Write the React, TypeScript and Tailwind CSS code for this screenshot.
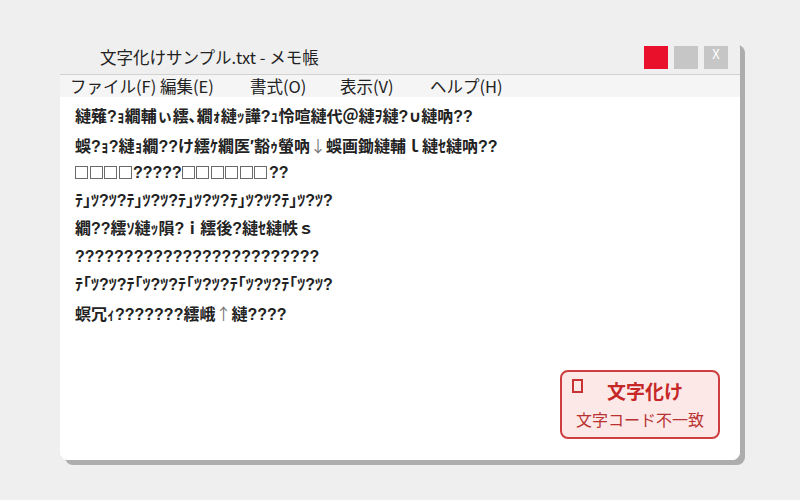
type Part = string | { box: number } | { arrow: string } | { sym: string };

const lines: Part[][] = [
  ["縺薙?ｮ繝輔ぃ繧､繝ｫ縺ｯ譁?ｭ怜喧縺代＠縺ｦ縺?", { sym: "∪" }, "縺吶??"],
  ["蜈?ｮ?縺ｮ繝??け繧ｹ繝医′豁ｩ螢吶", { arrow: "↓" }, "蜈画鋤縺輔ｌ縺ｾ縺吶??"],
  [{ box: 4 }, "?????", { box: 6 }, "??"],
  ["ﾃ｣ﾂ?ﾂ?ﾃ｣ﾂ?ﾂ?ﾃ｣ﾂ?ﾂ?ﾃ｣ﾂ?ﾂ?ﾃ｣ﾂ?ﾂ?"],
  ["繝??繧ｿ縺ｯ隕?ｉ繧後?縺ｾ縺帙ｓ"],
  ["?????????????????????????"],
  ["ﾃ｢ﾂ?ﾂ?ﾃ｢ﾂ?ﾂ?ﾃ｢ﾂ?ﾂ?ﾃ｢ﾂ?ﾂ?ﾃ｢ﾂ?ﾂ?"],
  ["螟冗ｨ???????繧峨", { arrow: "↑" }, "縺????"],
];

const menu = [
  { label: "ファイル(F) 編集(E)", w: "w-[180px]" },
  { label: "書式(O)", w: "w-[90px]" },
  { label: "表示(V)", w: "w-[90px]" },
  { label: "ヘルプ(H)", w: "w-[90px]" },
];

function Boxes({ n }: { n: number }) {
  return (
    <>
      {Array.from({ length: n }).map((_, i) => (
        <span
          key={i}
          className="inline-block w-[13px] h-[13px] border-[1.5px] border-[#6a6a6a] mr-[1.5px] align-[-1px]"
        />
      ))}
    </>
  );
}

function Piece({ p }: { p: Part }) {
  if (typeof p === "string") return <span>{p}</span>;
  if ("box" in p) return <Boxes n={p.box} />;
  if ("arrow" in p)
    return (
      <span className="font-normal text-[#7a7a7a]" style={{ fontFamily: '"Noto Sans CJK JP", sans-serif' }}>
        {p.arrow}
      </span>
    );
  return <span style={{ fontFamily: '"DejaVu Sans", sans-serif' }}>{p.sym}</span>;
}

export default function App() {
  return (
    <main
      className="w-[800px] h-[500px] bg-[#efefef] pt-[40px] pl-[60px]"
      style={{ fontFamily: '"Noto Sans CJK JP", "Noto Sans", sans-serif' }}
    >
      <div className="relative w-[680px] h-[420px] rounded-lg bg-[#efefef] shadow-[5px_5px_0_#adadad] flex flex-col overflow-hidden">
        {/* Title bar */}
        <div className="h-[34px] flex items-center justify-between pl-[40px] pr-[12px]">
          <span className="text-[16.5px] text-[#222] leading-none">文字化けサンプル.txt - メモ帳</span>
          <div className="flex gap-[6px] self-start mt-[6px]">
            <div className="w-[24px] h-[23px] bg-[#e8102a]" />
            <div className="w-[24px] h-[23px] bg-[#c6c6c6]" />
            <div className="w-[24px] h-[23px] bg-[#c6c6c6] flex justify-center text-white text-[13px] leading-[15px]">
              X
            </div>
          </div>
        </div>

        {/* Menu bar */}
        <div className="h-[23px] bg-[#f5f5f5] border-t border-[#d2d2d2] flex items-center pl-[10px] text-[16.5px] text-[#222] leading-none">
          {menu.map((m) => (
            <span key={m.label} className={`${m.w} whitespace-pre`}>
              {m.label}
            </span>
          ))}
        </div>

        {/* Text area */}
        <div
          className="flex-1 bg-white pt-[6px] pl-[15px]"
          style={{ fontFamily: '"Liberation Sans", "Noto Sans CJK JP", sans-serif' }}
        >
          {lines.map((parts, i) => (
            <div key={i} className="h-[28px] leading-[28px] text-[16px] font-bold whitespace-pre text-[#222]">
              {parts.map((p, j) => (
                <Piece key={j} p={p} />
              ))}
            </div>
          ))}
        </div>

        {/* Mojibake badge */}
        <div className="absolute right-[20px] bottom-[21px] w-[160px] h-[69px] rounded-lg border-2 border-[#cf3e3e] bg-[#fde8e8] flex flex-col items-center">
          <div className="absolute left-[10px] top-[7px] w-[11px] h-[14px] border-2 border-[#c83232]" />
          <span className="mt-[5px] ml-[10px] text-[19px] font-bold text-[#c62828] leading-[27px]">文字化け</span>
          <span className="mt-[4px] text-[16px] text-[#b83232] leading-[22px]">文字コード不一致</span>
        </div>
      </div>
    </main>
  );
}
